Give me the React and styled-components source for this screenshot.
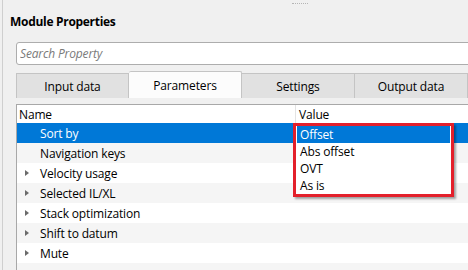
import styled, { createGlobalStyle } from "styled-components"

const GlobalStyle = createGlobalStyle`
  html, body {
    margin: 0;
    padding: 0;
    background: #f0f0f0;
    font-family: "Open Sans", "Noto Sans", sans-serif;
    font-size: 12px;
    color: #000;
  }
`

const Window = styled.div`
  width: 468px;
  height: 270px;
  overflow: hidden;
  position: relative;
  background: #f0f0f0;
`

const Frame = styled.div`
  margin-left: 2px;
  height: 100%;
  border-left: 1px solid #cfcfcf;
  display: flex;
  flex-direction: column;
`

const Grip = styled.div`
  margin: 3px 0 0 289px;
  width: 16px;
  height: 0;
  border-top: 1px dotted #b5b5b5;
`

const Title = styled.div`
  margin: 10px 0 0 7px;
  font-weight: 700;
  line-height: 16px;
  height: 16px;
  letter-spacing: -0.3px;
`

const Body = styled.div`
  margin: 12px 0 0 13px;
  width: 480px;
  display: flex;
  flex-direction: column;
  letter-spacing: -0.15px;
`

const Search = styled.input`
  box-sizing: border-box;
  height: 23px;
  width: 100%;
  margin: 0;
  padding: 0 3px;
  border: 1px solid #adadad;
  border-radius: 3px 0 0 3px;
  background: #fff;
  font-family: inherit;
  font-size: 12px;
  letter-spacing: inherit;
  outline: none;

  &::placeholder {
    color: #7a7a7a;
    font-style: italic;
  }
`

const Tabs = styled.div`
  margin-top: 6px;
  height: 27px;
  display: flex;
  align-items: flex-end;
`

const Tab = styled.div`
  box-sizing: border-box;
  width: 113px;
  height: ${(p) => (p.$active ? "27px" : "25px")};
  display: flex;
  align-items: center;
  justify-content: center;
  padding-top: ${(p) => (p.$active ? "0" : "1px")};
  background: ${(p) => (p.$active ? "#fcfcfc" : "#e1e1e1")};
  border: 1px solid #c4c4c4;
  border-bottom: none;
  border-left: ${(p) => (p.$first ? "1px solid #c4c4c4" : "none")};
  border-radius: ${(p) => (p.$active ? "2px 2px 0 0" : "0")};
`

const Tree = styled.div`
  position: relative;
  margin-top: 6px;
  border-top: 1px solid #a8a8a8;
  border-left: 1px solid #a8a8a8;
  background: #fff;
  display: flex;
  flex-direction: column;
`

const HeaderRow = styled.div`
  display: grid;
  grid-template-columns: 278px 1fr;
  height: 18px;
  background: #fff;
`

const HeaderCell = styled.div`
  display: flex;
  align-items: center;
  padding-left: ${(p) => (p.$value ? "3px" : "2px")};
  border-left: ${(p) => (p.$value ? "1px solid #e3e3e3" : "none")};
`

const Row = styled.div`
  display: flex;
  align-items: center;
  height: 20px;
  background: ${(p) => (p.$selected ? "#0078d7" : p.$alt ? "#f5f5f5" : "#fff")};
  color: ${(p) => (p.$selected ? "#fff" : "#000")};
`

const Arrow = styled.span`
  width: 23px;
  display: flex;
  justify-content: flex-end;

  &::before {
    content: "";
    display: ${(p) => (p.$hidden ? "none" : "block")};
    margin-right: 11px;
    width: 0;
    height: 0;
    border-top: 3.5px solid transparent;
    border-bottom: 3.5px solid transparent;
    border-left: 4px solid #6b6b6b;
  }
`

const Label = styled.span`
  padding-left: 0;
`

const Popup = styled.div`
  position: absolute;
  left: 276px;
  top: 18px;
  width: 153px;
  padding: 0 1px;
  background: #fff;
  border: 3px solid #e3202b;
  box-shadow: 2px 2px 2px rgba(0, 0, 0, 0.35);
  display: flex;
  flex-direction: column;
`

const Option = styled.div`
  height: 17px;
  display: flex;
  align-items: center;
  padding-left: 3px;
  background: ${(p) => (p.$selected ? "#0078d7" : "transparent")};
  color: ${(p) => (p.$selected ? "#fff" : "#000")};
`

const rows = [
  { name: "Sort by", leaf: true, selected: true },
  { name: "Navigation keys", leaf: true },
  { name: "Velocity usage" },
  { name: "Selected IL/XL" },
  { name: "Stack optimization" },
  { name: "Shift to datum" },
  { name: "Mute" },
  { name: "", leaf: true },
]

const options = ["Offset", "Abs offset", "OVT", "As is"]

export default function App() {
  return (
    <Window>
      <GlobalStyle />
      <Frame>
        <Grip />
        <Title>Module Properties</Title>
        <Body>
          <Search placeholder="Search Property" />
          <Tabs>
            <Tab $first>Input data</Tab>
            <Tab $active>Parameters</Tab>
            <Tab>Settings</Tab>
            <Tab>Output data</Tab>
          </Tabs>
          <Tree>
            <HeaderRow>
              <HeaderCell>Name</HeaderCell>
              <HeaderCell $value>Value</HeaderCell>
            </HeaderRow>
            {rows.map((r, i) => (
              <Row key={i} $selected={r.selected} $alt={i % 2 === 1}>
                <Arrow $hidden={r.leaf} />
                <Label>{r.name}</Label>
              </Row>
            ))}
            <Popup>
              {options.map((o, i) => (
                <Option key={o} $selected={i === 0}>
                  {o}
                </Option>
              ))}
            </Popup>
          </Tree>
        </Body>
      </Frame>
    </Window>
  )
}
